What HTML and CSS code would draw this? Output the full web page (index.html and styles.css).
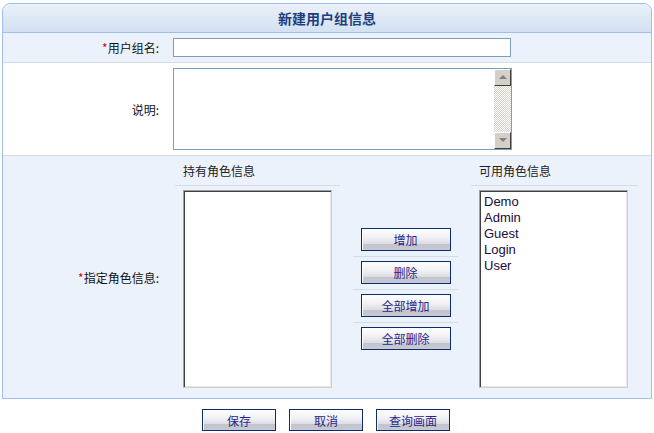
FILE: index.html
```html
<!DOCTYPE HTML>
<html>
    <head>
        <meta http-equiv="Content-Type" content="text/html; charset=UTF-8">
        <title>新建用户组信息</title>
        <link rel="stylesheet" href="styles.css">
    </head>
    <body>
        <div class="panel">
            <div class="title">新建用户组信息</div>

            <div class="row alt">
                <label class="label" for="groupName"><span class="req">*</span>用户组名:</label>
                <div class="field"><input type="text" id="groupName" class="text"/></div>
            </div>

            <div class="row memo">
                <label class="label" for="memo">说明:</label>
                <div class="field">
                    <div class="area">
                        <textarea id="memo"></textarea>
                        <div class="vscroll">
                            <span class="sbtn up"></span>
                            <span class="track"></span>
                            <span class="sbtn down"></span>
                        </div>
                    </div>
                </div>
            </div>

            <div class="row alt roles">
                <div class="label"><span class="req">*</span>指定角色信息:</div>
                <div class="picker">
                    <div class="cap">持有角色信息</div>
                    <div></div>
                    <div class="cap">可用角色信息</div>

                    <div class="box"><div class="list" id="owned"></div></div>
                    <div class="ops">
                        <div class="op"><button class="btn">增加</button></div>
                        <div class="op"><button class="btn">删除</button></div>
                        <div class="op"><button class="btn">全部增加</button></div>
                        <div class="op last"><button class="btn">全部删除</button></div>
                    </div>
                    <div class="box">
                        <div class="list" id="usable">
                            <div class="item">Demo</div>
                            <div class="item">Admin</div>
                            <div class="item">Guest</div>
                            <div class="item">Login</div>
                            <div class="item">User</div>
                        </div>
                    </div>
                </div>
            </div>
        </div>

        <div class="actions">
            <button class="btn small">保存</button>
            <button class="btn small">取消</button>
            <button class="btn small">查询画面</button>
        </div>
    </body>
</html>
```

FILE: styles.css
```css
body {
    margin: 3px 2px 0;
    background: #fff;
    font-family: "Noto Sans CJK SC", "Liberation Sans", sans-serif;
    font-size: 12px;
    color: #000;
}

.panel {
    width: 648px;
    border: 1px solid #9fc0e8;
    border-radius: 8px 8px 0 0;
    background: #ebf2fc;
}

.title {
    height: 28px;
    line-height: 28px;
    text-align: center;
    font-size: 14px;
    font-weight: bold;
    color: #1e3f7c;
    border-bottom: 1px solid #9fc0e8;
    border-radius: 7px 7px 0 0;
    background: linear-gradient(#e9f0f9, #d3e1f2);
}

.row {
    display: grid;
    grid-template-columns: 170px 1fr;
    border-bottom: 1px solid #d6dce6;
    background: #fff;
}
.row.alt {
    background: #ebf2fc;
}
.row.roles {
    border-bottom: none;
}

.label {
    display: flex;
    align-items: center;
    justify-content: flex-end;
    padding-right: 14px;
    color: #111;
}
.req {
    color: #e00000;
}

.field {
    display: flex;
    align-items: center;
    height: 29px;
}
.memo .field {
    height: 92px;
}

.text {
    width: 332px;
    height: 17px;
    margin: 0;
    padding: 0 2px;
    border: 1px solid #7f9db9;
    font: 12px "Liberation Sans", sans-serif;
    box-sizing: content-box;
}

.area {
    display: flex;
    width: 337px;
    height: 80px;
    border: 1px solid #7f9db9;
    background: #fff;
}
.area textarea {
    flex: 1;
    margin: 0;
    border: none;
    resize: none;
    outline: none;
    padding: 2px;
}
.vscroll {
    display: flex;
    flex-direction: column;
    width: 17px;
}
.track {
    flex: 1;
    background: repeating-conic-gradient(#d4d0c8 0 25%, #fff 0 50%) 0 0 / 2px 2px;
}
.sbtn {
    position: relative;
    height: 15px;
    background: #d4d0c8;
    border: 1px solid;
    border-color: #fff #404040 #404040 #fff;
}
.sbtn::after {
    content: "";
    position: absolute;
    left: 4px;
    top: 5px;
    border-left: 4px solid transparent;
    border-right: 4px solid transparent;
}
.sbtn.up::after {
    border-bottom: 4px solid #808080;
}
.sbtn.down::after {
    border-top: 4px solid #808080;
}

.picker {
    display: grid;
    grid-template-columns: 165px 105px 167px;
    grid-template-rows: 30px auto;
    column-gap: 13px;
    margin-left: 2px;
    padding-bottom: 10px;
}
.cap {
    padding-left: 8px;
    line-height: 29px;
    color: #222;
    border-bottom: 1px solid #d6dce6;
}

.box {
    padding: 4px 0 0 8px;
}
.list {
    box-sizing: border-box;
    width: 149px;
    height: 198px;
    padding: 3px 3px;
    overflow: hidden;
    background: #fff;
    border: 1px solid;
    border-color: #a0a0a0 #d4d0c8 #d4d0c8 #a0a0a0;
    box-shadow: inset 1px 1px #404040, inset -1px -1px #e8e6e0;
    font: 13px "Liberation Sans", sans-serif;
    color: #1a0a3a;
}
.list .item {
    line-height: 16px;
    padding-left: 1px;
}

.ops {
    align-self: center;
    padding-top: 4px;
}
.op {
    display: flex;
    justify-content: center;
    padding: 4px 0 5px;
    border-bottom: 1px solid #d6dce6;
}
.op.last {
    border-bottom: none;
}

.btn {
    width: 90px;
    height: 23px;
    margin: 0;
    padding: 0;
    border: 1px solid #0b2d6e;
    box-shadow: inset 1px 1px #fff;
    background: linear-gradient(#ffffff 0%, #f1f1f5 40%, #dcdce4 70%, #c4c4ce 72%, #c8c8d2 100%);
    font-family: "Noto Sans CJK SC", sans-serif;
    font-size: 12px;
    color: #27278a;
    cursor: pointer;
}
.btn.small {
    width: 74px;
    height: 22px;
}

.actions {
    display: flex;
    justify-content: center;
    gap: 13px;
    width: 648px;
    margin-top: 10px;
}
```
